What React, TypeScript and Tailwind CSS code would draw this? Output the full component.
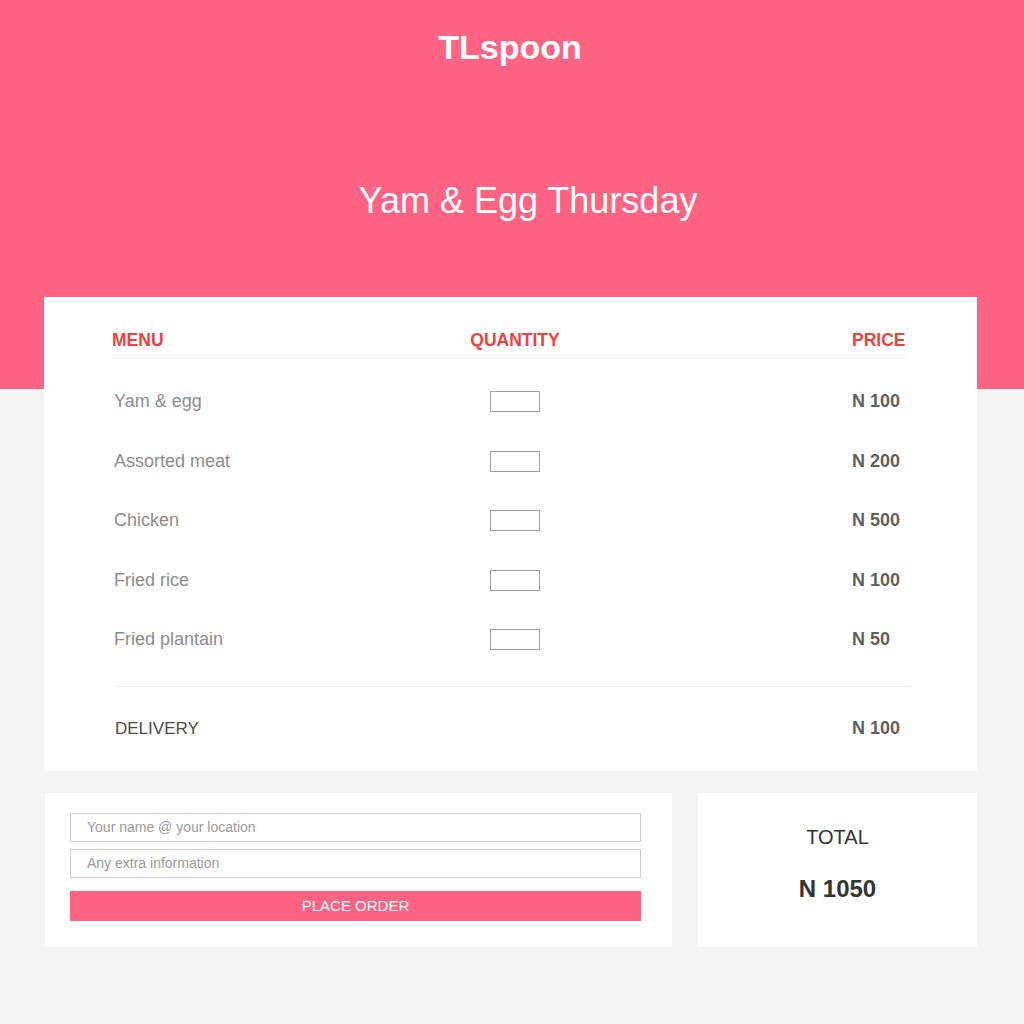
import { useState } from "react";

const items = [
  { name: "Yam & egg", price: 100 },
  { name: "Assorted meat", price: 200 },
  { name: "Chicken", price: 500 },
  { name: "Fried rice", price: 100 },
  { name: "Fried plantain", price: 50 },
];

export default function App()
{
  const [name, setName] = useState('');
  const [info, setInfo] = useState('');

  return (
    <div className="min-h-[1024px] w-full bg-[#f4f4f4] font-['Liberation_Sans',Arial,sans-serif]">
      {/* header */}
      <div className="h-[389px] bg-[#ff6384] flex flex-col items-center pt-[28px]">
        <h1 className="pr-[4px] text-[34px] leading-[39px] font-bold text-white">TLspoon</h1>
        <h2 className="mt-[113px] pl-[32px] text-[36px] leading-[41px] text-white">Yam &amp; Egg Thursday</h2>
      </div>

      {/* menu card */}
      <div className="-mt-[92px] ml-[44px] w-[933px] bg-white px-[70px] pl-[68px]">
        <div className="h-[62px] flex items-end pb-[8px] border-b border-[#f0f0f0] text-[17.5px] leading-[20px] font-bold text-[#ec4141]">
          <div className="w-[290px]">MENU</div>
          <div className="w-[226px] text-center">QUANTITY</div>
          <div className="ml-auto w-[55px]">PRICE</div>
        </div>

        <div className="pt-[13px]">
          {items.map((item) => (
            <div key={item.name} className="h-[59.5px] flex items-center">
              <div className="w-[290px] pl-[2px] text-[18px] text-[#8c8c8c]">{item.name}</div>
              <div className="w-[226px] flex justify-center">
                <input type="text" className="w-[50px] h-[21px] border border-[#a0a0a0] bg-white outline-none" />
              </div>
              <div className="ml-auto w-[55px] text-[18px] font-bold text-[#5f5f5f]">N {item.price}</div>
            </div>
          ))}
        </div>

        <div className="mt-[16px] ml-[3px] mr-[-3px] border-t border-[#eeeeee]" />

        <div className="h-[84px] flex items-center">
          <div className="pl-[3px] text-[17px] text-[#4a4a4a]">DELIVERY</div>
          <div className="ml-auto w-[55px] text-[18px] font-bold text-[#5f5f5f]">N 100</div>
        </div>
      </div>

      {/* order + total */}
      <div className="mt-[22px] ml-[45px] flex gap-[26px]">
        <div className="w-[627px] h-[154px] bg-white pt-[20px] pl-[25px] pr-[31px]">
          <input
            value={name}
            onChange={(e) => setName(e.target.value)}
            placeholder="Your name @ your location"
            className="block w-full h-[29px] border border-[#cccccc] px-[16px] text-[14px] text-[#555] placeholder:text-[#9a9a9a] outline-none"
          />
          <input
            value={info}
            onChange={(e) => setInfo(e.target.value)}
            placeholder="Any extra information"
            className="block mt-[7px] w-full h-[29px] border border-[#cccccc] px-[16px] text-[14px] text-[#555] placeholder:text-[#9a9a9a] outline-none"
          />
          <button className="mt-[13px] w-full h-[30px] bg-[#ff6384] text-white text-[15px] leading-[30px]">
            PLACE ORDER
          </button>
        </div>

        <div className="w-[279px] h-[154px] bg-white flex flex-col items-center pt-[32px]">
          <div className="text-[20px] leading-[24px] text-[#333]">TOTAL</div>
          <div className="mt-[26px] text-[24px] leading-[28px] font-bold text-[#333]">N 1050</div>
        </div>
      </div>
    </div>
  );
}
